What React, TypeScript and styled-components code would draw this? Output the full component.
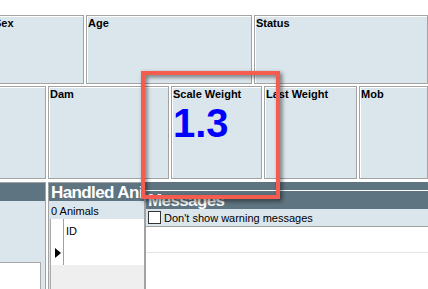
import React from 'react';
import styled, { createGlobalStyle } from 'styled-components';

const GlobalStyle = createGlobalStyle`
    html, body {
        margin: 0;
        padding: 0;
        background: #ffffff;
        font-family: "Liberation Sans", Arial, sans-serif;
    }
`;

const Screen = styled.div`
    position: relative;
    width: 428px;
    height: 289px;
    overflow: hidden;
    background: #ffffff;
    display: flex;
    flex-direction: column;
`;

const FieldRow = styled.div<{ $height: number; $top: number }>`
    display: flex;
    gap: 2px;
    height: ${p => p.$height}px;
    margin-top: ${p => p.$top}px;
    margin-left: -8px;
    flex-shrink: 0;
`;

const FieldPanel = styled.div<{ $width?: number }>`
    box-sizing: border-box;
    ${p => (p.$width ? `width: ${p.$width}px; flex-shrink: 0;` : 'flex: 1;')}
    background: #dbe6ec;
    border: 1px solid #a3a3a3;
    box-shadow: inset 1px 1px 0 #ffffff;
    padding: 1px 2px 0 1px;
`;

const FieldLabel = styled.div`
    font-size: 11px;
    line-height: 13px;
    font-weight: bold;
    color: #000000;
    white-space: nowrap;
`;

const BigValue = styled.div`
    margin-top: 2px;
    font-size: 40px;
    line-height: 40px;
    font-weight: bold;
    color: #0000ff;
`;

const BottomRow = styled.div`
    display: flex;
    gap: 2px;
    flex: 1;
    margin-top: 3px;
    margin-left: -8px;
`;

const DockPanel = styled.div<{ $width?: number }>`
    box-sizing: border-box;
    ${p => (p.$width ? `width: ${p.$width}px; flex-shrink: 0;` : 'flex: 1;')}
    display: flex;
    flex-direction: column;
    background: #dbe6ec;
    border: 1px solid #a3a3a3;
    border-bottom: none;
    overflow: hidden;
`;

const DockHeader = styled.div`
    height: 18px;
    flex-shrink: 0;
    background: #5e7481;
    color: #ffffff;
    font-size: 17px;
    line-height: 19px;
    font-weight: bold;
    letter-spacing: -0.6px;
    padding-left: 2px;
    white-space: nowrap;
    overflow: hidden;
`;

const SideList = styled.div`
    margin-top: auto;
    margin-right: 4px;
    height: 26px;
    background: #ffffff;
    border-right: 1px solid #a9a9a9;
    border-top: 1px solid #a9a9a9;
`;

const CountLine = styled.div`
    height: 18px;
    flex-shrink: 0;
    font-size: 11px;
    line-height: 20px;
    color: #000000;
    padding-left: 2px;
    white-space: nowrap;
`;

const GridArea = styled.div`
    flex: 1;
    margin-left: 1px;
    display: flex;
    flex-direction: column;
    background: #efefef;
    border-left: 1px solid #a9a9a9;
`;

const Grid = styled.div`
    height: 46px;
    display: flex;
    background: #ffffff;
`;

const RowHeaderCol = styled.div`
    width: 12px;
    border-right: 1px solid #a0a0a0;
    position: relative;
`;

const RowPointer = styled.div`
    position: absolute;
    left: 4px;
    top: 29px;
    width: 0;
    height: 0;
    border-top: 5px solid transparent;
    border-bottom: 5px solid transparent;
    border-left: 6px solid #000000;
`;

const ColumnHead = styled.div`
    padding: 6px 0 0 2px;
    font-size: 11px;
    line-height: 13px;
    color: #000000;
`;

const MessagesColumn = styled.div`
    flex: 1;
    margin-left: -2px;
    display: flex;
    flex-direction: column;
    background: #5e7481;
    padding-top: 8px;
`;

const MessagesWindow = styled.div`
    flex: 1;
    display: flex;
    flex-direction: column;
    background: #ffffff;
    border-left: 1px solid #a0a0a0;
    border-top: 1px solid #ffffff;
`;

const OptionBar = styled.label`
    box-sizing: border-box;
    height: 18px;
    display: flex;
    align-items: center;
    gap: 3px;
    padding-left: 2px;
    background: #dbe6ec;
    border-bottom: 1px solid #a0a0a0;
    font-size: 11px;
    color: #000000;
    white-space: nowrap;
`;

const CheckBox = styled.span`
    box-sizing: border-box;
    width: 13px;
    height: 13px;
    background: #ffffff;
    border: 1px solid #333333;
`;

const MessageLine = styled.div`
    height: 25px;
    border-bottom: 1px solid #e6e6e6;
`;

const Highlight = styled.div`
    position: absolute;
    left: 141px;
    top: 71px;
    width: 139px;
    height: 128px;
    box-sizing: border-box;
    border: 4px solid #f35c4e;
    filter: drop-shadow(2px 2px 2px rgba(0, 0, 0, 0.55));
    pointer-events: none;
`;

const App: React.FC = () => {
    return (
        <>
            <GlobalStyle />
            <Screen>
                <FieldRow $height={69} $top={15}>
                    <FieldPanel $width={92}>
                        <FieldLabel>Sex</FieldLabel>
                    </FieldPanel>
                    <FieldPanel $width={166}>
                        <FieldLabel>Age</FieldLabel>
                    </FieldPanel>
                    <FieldPanel>
                        <FieldLabel>Status</FieldLabel>
                    </FieldPanel>
                </FieldRow>

                <FieldRow $height={93} $top={2}>
                    <FieldPanel $width={54} />
                    <FieldPanel $width={121}>
                        <FieldLabel>Dam</FieldLabel>
                    </FieldPanel>
                    <FieldPanel $width={91}>
                        <FieldLabel>Scale Weight</FieldLabel>
                        <BigValue>1.3</BigValue>
                    </FieldPanel>
                    <FieldPanel $width={93}>
                        <FieldLabel>Last Weight</FieldLabel>
                    </FieldPanel>
                    <FieldPanel>
                        <FieldLabel>Mob</FieldLabel>
                    </FieldPanel>
                </FieldRow>

                <BottomRow>
                    <DockPanel $width={54}>
                        <DockHeader />
                        <SideList />
                    </DockPanel>
                    <DockPanel $width={97}>
                        <DockHeader>Handled Animals</DockHeader>
                        <CountLine>0 Animals</CountLine>
                        <GridArea>
                            <Grid>
                                <RowHeaderCol>
                                    <RowPointer />
                                </RowHeaderCol>
                                <ColumnHead>ID</ColumnHead>
                            </Grid>
                        </GridArea>
                    </DockPanel>
                    <MessagesColumn>
                        <MessagesWindow>
                            <DockHeader>Messages</DockHeader>
                            <OptionBar>
                                <CheckBox />
                                Don't show warning messages
                            </OptionBar>
                            <MessageLine />
                        </MessagesWindow>
                    </MessagesColumn>
                </BottomRow>

                <Highlight />
            </Screen>
        </>
    );
};

export default App;
